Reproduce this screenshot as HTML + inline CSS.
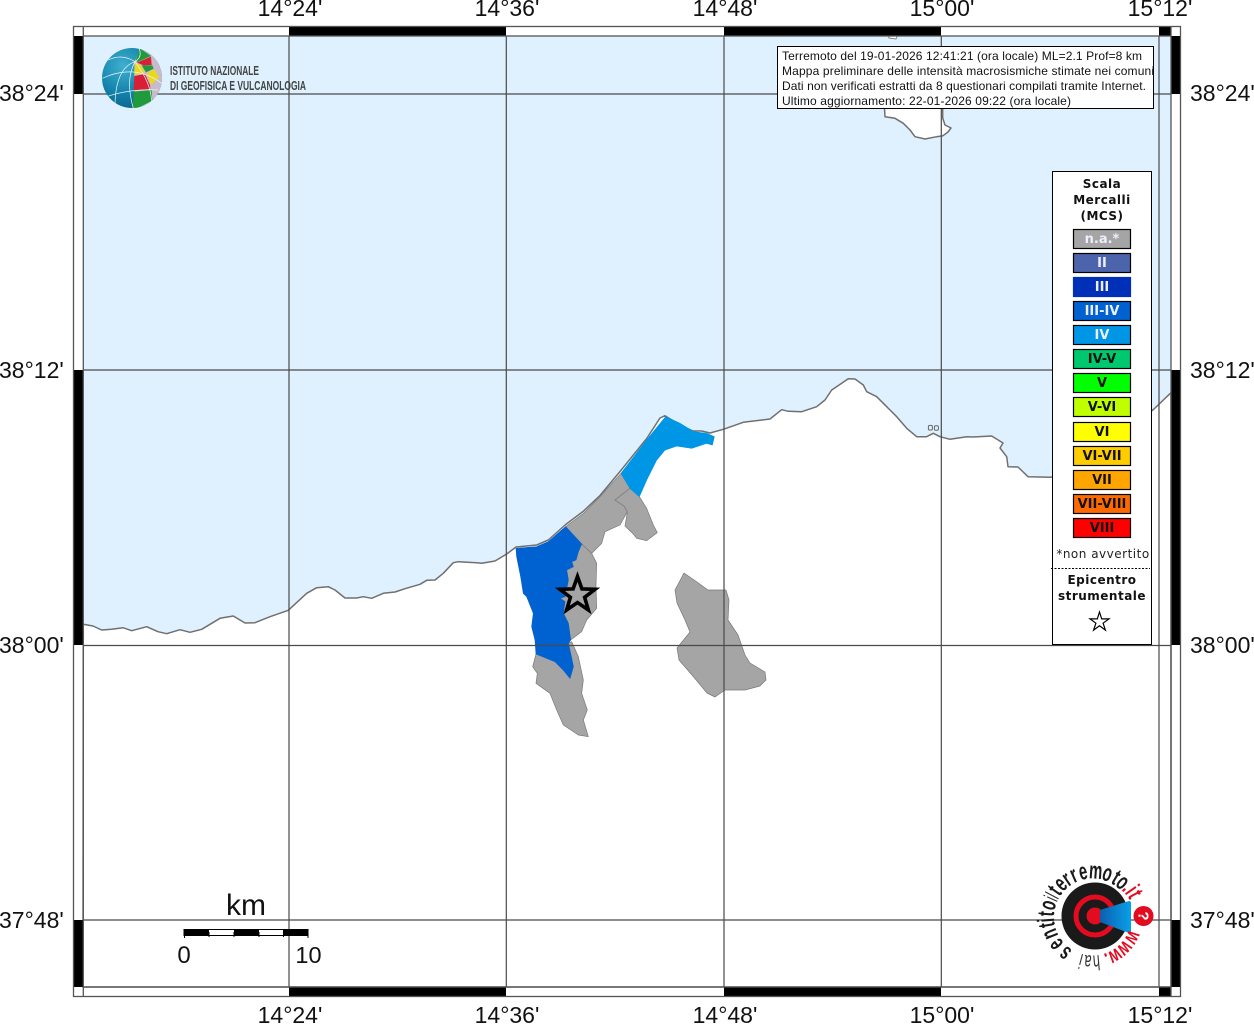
<!DOCTYPE html>
<html lang="it">
<head>
<meta charset="utf-8">
<title>Mappa macrosismica</title>
<style>
html,body{margin:0;padding:0;background:#fff;width:1254px;height:1024px;overflow:hidden}
svg{display:block}
.ax{font-family:"Liberation Sans",sans-serif;font-size:23px;fill:#111}
.hd{font-family:"Liberation Sans",sans-serif;font-size:12px;fill:#111}
.lg{font-family:"DejaVu Sans",sans-serif;font-size:12px;font-weight:bold;letter-spacing:.5px;text-anchor:middle;fill:#111}
.lb{font-family:"DejaVu Sans",sans-serif;font-size:13px;font-weight:bold;text-anchor:middle;fill:#111}
.w{fill:#eef}
.soft{filter:blur(.3px)}
.rb{font-family:"Liberation Sans",sans-serif;font-size:24px;font-weight:bold;text-anchor:middle;fill:#1a1a1a}
.rr{font-family:"Liberation Sans",sans-serif;font-size:24px;font-weight:bold;text-anchor:middle;fill:#e30b20}
.rw{font-family:"Liberation Sans",sans-serif;font-size:22px;font-weight:bold;text-anchor:middle;fill:#e30b20}
.rt{font-family:"Liberation Sans",sans-serif;font-size:21px;text-anchor:middle;fill:#333}
</style>
</head>
<body>
<svg width="1254" height="1024" viewBox="0 0 1254 1024" xmlns="http://www.w3.org/2000/svg">
<rect width="1254" height="1024" fill="#fff"/>
<!-- sea -->
<rect x="83" y="36" width="1088" height="951" fill="#dff1fe"/>
<g class="soft">
<!-- land -->
<polygon fill="#fff" stroke="#707070" stroke-width="1.5" stroke-linejoin="round" points="83.3,624.3 93,626 101.7,630 111.7,629.3 123,627.7 131.7,630.7 146.7,626.7 158,631.7 166.7,633.7 180,629.7 190,632.3 201.7,629.3 220,618.3 233.3,616 245,623 255,622.7 270,616.7 288.3,610.3 306.7,593.3 316.7,587.7 328.3,586.7 335,590 345,598 356.7,598 363.3,596.7 371.7,598.3 383.3,593.3 395,592 405,588.7 420,584.3 426.7,580.3 435,580 443.3,573.3 453.3,562.7 458.3,561.7 476.7,562.7 481.7,563.3 495,561 506.7,554 516,547 536.7,545 548.3,540 565.7,524.5 583,511.5 600,495.5 620,471.5 646.7,438.5 660,418 665,415.7 680,425 693,431 701.7,431 710,433 723.3,429.3 743.3,422.3 770,419 781.7,409.7 788.3,411.3 801.7,411.7 816.7,406.7 825,400 831.7,390 841.7,383.3 848.3,378.7 855,379 863.3,385 866.7,391.7 876.7,396.7 886.7,406.7 896.7,416.7 906.7,428.3 916.7,436.7 926.7,436.7 933.3,433.3 940,436.7 950,439.3 966.7,436.7 973,437 991.7,436 1003,443 1000,448 1006.7,456.7 1008,466.7 1018,467 1028,476.7 1050,477.3 1100,470 1140,420 1154,409 1171,392.7 1171,987 83,987"/>
<!-- north island -->
<polygon fill="#fff" stroke="#707070" stroke-width="1.5" stroke-linejoin="round" points="884,100 885,116.7 895,118.3 903.3,123.3 910,130 915,136.7 925,139 936.7,136.7 943,135.7 948,132 951,128 945,125 942.7,118 942.7,100"/>
<polygon fill="#fff" stroke="#888" stroke-width="1" points="888,34 889,38 896,39 898,34"/>
<rect x="928.4" y="425.4" width="4" height="4.6" rx="1.3" fill="none" stroke="#666"/>
<rect x="934.4" y="425.7" width="4" height="4.6" rx="1.3" fill="none" stroke="#666"/>
<!-- municipalities -->
<g transform="translate(500,400) scale(.33333)" stroke="#777" stroke-width="2" stroke-linejoin="round">
<polygon fill="#a5a5a5" points="197,380 250,340 300,290 363,220 390,265 345,300 372,318 382,335 360,375 315,395 305,430 275,460 245,432"/>
<polygon fill="#a5a5a5" points="245,432 275,460 290,490 288,560 290,625 260,660 245,695 212,720 205,670 190,640 195,605 180,595 195,590 205,540 200,510 220,500 215,485 228,480 235,455"/>
<polygon fill="#a5a5a5" points="108,762 165,785 190,810 210,835 220,800 212,760 205,730 215,725 235,770 250,840 245,880 262,930 250,960 265,1010 235,1005 190,975 170,930 150,880 108,850 112,820 98,800"/>
<polygon fill="#a5a5a5" points="390,265 418,290 440,325 460,375 472,398 440,422 410,415 398,400 375,378 382,335 372,318 345,300"/>
<polygon fill="#0062d0" stroke="#0062d0" points="48,445 110,440 145,425 197,380 245,432 235,455 228,480 215,485 220,500 200,510 205,540 195,590 180,595 195,605 190,640 205,670 212,720 205,730 215,775 220,800 210,835 190,810 165,785 108,762 105,720 95,680 100,640 80,590 70,580 62,530 50,470"/>
<polygon fill="#0096e6" stroke="#0096e6" points="363,220 440,120 497,50 540,70 580,95 620,100 643,110 637,135 620,130 575,145 530,138 495,150 470,180 440,240 418,290 390,265"/>
</g>
<polygon fill="#a5a5a5" stroke="#777" stroke-width=".7" stroke-linejoin="round" points="684,573 697,582 708,590 726,590 729,600 728,620 738,635 745,655 750,663 765,672 766,680 760,686 745,690 725,690 715,697 707,693 692,675 679,660 677,648 690,632 685,620 677,603 675,590"/>
</g>
<!-- grid -->
<g stroke="#4a4a4a" stroke-width="1.2" fill="none">
<path d="M289 36V987M506.3 36V987M724 36V987M941.3 36V987M1159 36V987"/>
<path d="M83 94H1171M83 370H1171M83 645.5H1171M83 920H1171"/>
</g>
<!-- epicentre star -->
<polygon fill="#a5a5a5" stroke="#000" stroke-width="3.6" stroke-miterlimit="10" points="577.5,576.5 581.9,588.9 595.1,589.3 584.6,597.3 588.4,610 577.5,602.5 566.6,610 570.4,597.3 559.9,589.3 573.1,588.9"/>
<!-- frame -->
<g fill="#000">
<rect x="289" y="26" width="217" height="10"/><rect x="724" y="26" width="217" height="10"/><rect x="1159" y="26" width="12" height="10"/>
<rect x="289" y="987" width="217" height="10"/><rect x="724" y="987" width="217" height="10"/><rect x="1159" y="987" width="12" height="10"/>
<rect x="73" y="36" width="10" height="58"/><rect x="73" y="370" width="10" height="275"/><rect x="73" y="920" width="10" height="67"/>
<rect x="1171" y="36" width="10" height="58"/><rect x="1171" y="370" width="10" height="275"/><rect x="1171" y="920" width="10" height="67"/>
</g>
<g fill="none" stroke="#555" stroke-width="1.3">
<rect x="73.5" y="26.5" width="1107" height="970"/>
<rect x="83.3" y="36" width="1087.7" height="951"/>
<path d="M83.3 26V36M1171 26V36M83.3 987V997M1171 987V997"/>
</g>
<!-- axis labels -->
<g class="ax" text-anchor="middle">
<text x="290" y="16">14°24'</text><text x="507" y="16">14°36'</text><text x="725" y="16">14°48'</text><text x="942" y="16">15°00'</text><text x="1160" y="16">15°12'</text>
<text x="290" y="1023">14°24'</text><text x="507" y="1023">14°36'</text><text x="725" y="1023">14°48'</text><text x="942" y="1023">15°00'</text><text x="1160" y="1023">15°12'</text>
</g>
<g class="ax">
<text x="-1" y="101">38°24'</text><text x="-1" y="378">38°12'</text><text x="-1" y="653">38°00'</text><text x="-1" y="928">37°48'</text>
<text x="1190" y="101">38°24'</text><text x="1190" y="378">38°12'</text><text x="1190" y="653">38°00'</text><text x="1190" y="928">37°48'</text>
</g>
<!-- INGV logo -->
<defs>
<clipPath id="gc"><circle cx="132" cy="78" r="30"/></clipPath>
<radialGradient id="gb" cx=".35" cy=".3" r=".8"><stop offset="0" stop-color="#3fb0cf"/><stop offset=".6" stop-color="#107fa8"/><stop offset="1" stop-color="#0c5f85"/></radialGradient>
<linearGradient id="cone" x1="0" x2="1" y1="0" y2="0"><stop offset="0" stop-color="#0b5fb0"/><stop offset="1" stop-color="#0aa0e6"/></linearGradient>
</defs>
<circle cx="132" cy="78" r="30" fill="url(#gb)"/>
<g clip-path="url(#gc)">
<g transform="translate(95,40) scale(.33333)">
<polygon fill="#c8bccb" points="140,20 215,20 215,215 118,215 118,65"/>
<polygon fill="#1f9a3c" points="122,60 135,25 168,48 128,66"/>
<polygon fill="#d81f36" points="126,68 168,50 170,75 146,76"/>
<polygon fill="#ecd81a" points="120,68 136,74 150,98 118,106"/>
<polygon fill="#1f9a3c" points="140,76 172,76 176,86 153,97"/>
<polygon fill="#ecd81a" points="155,100 178,88 192,113 168,134"/>
<polygon fill="#d81f36" points="118,108 150,102 165,135 166,147 116,152"/>
<polygon fill="#1f9a3c" points="116,155 170,150 172,182 113,212"/>
<g fill="none" stroke="#e8f4f8" stroke-width="2.2">
<path d="M120 65Q60 85 60 200"/>
<path d="M120 65Q90 120 115 205"/>
<path d="M120 65Q170 130 170 190"/>
<path d="M120 65Q145 50 130 20"/>
<path d="M40 60Q80 40 120 65"/>
<path d="M22 115Q120 70 200 130"/>
<path d="M35 170Q110 145 190 150"/>
</g>
</g>
</g>
<g font-family="'Liberation Sans',sans-serif" fill="#444" font-weight="bold" font-size="13">
<text x="170" y="75" textLength="89" lengthAdjust="spacingAndGlyphs">ISTITUTO NAZIONALE</text>
<text x="170" y="90" textLength="136" lengthAdjust="spacingAndGlyphs">DI GEOFISICA E VULCANOLOGIA</text>
</g>
<!-- header -->
<rect x="777.5" y="46.5" width="376" height="62" fill="#fff" stroke="#000"/>
<text class="hd" x="782" y="60" textLength="360">Terremoto del 19-01-2026 12:41:21 (ora locale) ML=2.1 Prof=8 km</text>
<text class="hd" x="782" y="75" textLength="372">Mappa preliminare delle intensità macrosismiche stimate nei comuni</text>
<text class="hd" x="782" y="90" textLength="364">Dati non verificati estratti da 8 questionari compilati tramite Internet.</text>
<text class="hd" x="782" y="105" textLength="289">Ultimo aggiornamento: 22-01-2026 09:22 (ora locale)</text>
<!-- legend -->
<rect x="1052.5" y="171.5" width="99" height="473" fill="#fff" stroke="#000"/>
<text class="lg" x="1102" y="188">Scala</text>
<text class="lg" x="1102" y="204">Mercalli</text>
<text class="lg" x="1102" y="220">(MCS)</text>
<g stroke="#000" stroke-width="1.2">
<rect x="1073.5" y="229.5" width="57" height="19" fill="#a5a5a5"/>
<rect x="1073.5" y="253.5" width="57" height="19" fill="#4c64ac"/>
<rect x="1073.5" y="277.5" width="57" height="19" fill="#0030b8" stroke="#0030b8"/>
<rect x="1073.5" y="301.5" width="57" height="19" fill="#0062d0"/>
<rect x="1073.5" y="325.5" width="57" height="19" fill="#0096e6"/>
<rect x="1073.5" y="349.5" width="57" height="19" fill="#00c86e"/>
<rect x="1073.5" y="373.5" width="57" height="19" fill="#00ff00"/>
<rect x="1073.5" y="397.5" width="57" height="19" fill="#c0ff00"/>
<rect x="1073.5" y="422.5" width="57" height="19" fill="#ffff00"/>
<rect x="1073.5" y="446.5" width="57" height="19" fill="#ffcc00"/>
<rect x="1073.5" y="470.5" width="57" height="19" fill="#ffa500"/>
<rect x="1073.5" y="494.5" width="57" height="19" fill="#ff6a00"/>
<rect x="1073.5" y="518.5" width="57" height="19" fill="#ff0000"/>
</g>
<text class="lb w" x="1102" y="243">n.a.*</text>
<text class="lb w" x="1102" y="267">II</text>
<text class="lb w" x="1102" y="291">III</text>
<text class="lb w" x="1102" y="315">III-IV</text>
<text class="lb w" x="1102" y="339">IV</text>
<text class="lb" x="1102" y="363">IV-V</text>
<text class="lb" x="1102" y="387">V</text>
<text class="lb" x="1102" y="411">V-VI</text>
<text class="lb" x="1102" y="436">VI</text>
<text class="lb" x="1102" y="460">VI-VII</text>
<text class="lb" x="1102" y="484">VII</text>
<text class="lb" x="1102" y="508">VII-VIII</text>
<text class="lb" x="1102" y="532">VIII</text>
<text x="1103" y="558" font-family="'DejaVu Sans',sans-serif" font-size="12" letter-spacing=".5" text-anchor="middle" fill="#222">*non avvertito</text>
<path d="M1051 568.5H1150" stroke="#000" stroke-dasharray="2 1.5"/>
<text class="lg" x="1102" y="584">Epicentro</text>
<text class="lg" x="1102" y="600">strumentale</text>
<polygon fill="#fff" stroke="#000" stroke-width="1.2" points="1099.5,612 1101.7,618.9 1109,618.9 1103.1,623.2 1105.4,630.1 1099.5,625.8 1093.6,630.1 1095.9,623.2 1090,618.9 1097.3,618.9"/>
<!-- scale bar -->
<rect x="184" y="929.5" width="124" height="6" fill="#fff" stroke="#000" stroke-width="1"/>
<g fill="#000">
<rect x="184" y="929" width="25" height="6.5"/><rect x="234" y="929" width="25" height="6.5"/><rect x="283" y="929" width="25" height="6.5"/>
</g>
<path d="M184.5 929V938M209 932V937M234 932V937M259 932V937M283.5 932V937M308 929V938" stroke="#000"/>
<g font-family="'Liberation Sans',sans-serif" fill="#111" text-anchor="middle">
<text x="246" y="915" font-size="30">km</text>
<text x="184" y="963" font-size="24">0</text>
<text x="308.5" y="963" font-size="23.5">10</text>
</g>
<!-- HSIT logo -->
<circle cx="1095" cy="916" r="33.5" fill="#1a1a1a"/>
<circle cx="1095" cy="916" r="19" fill="none" stroke="#e30b20" stroke-width="5"/>
<circle cx="1095" cy="916" r="8.5" fill="#e30b20"/>
<path d="M1100 910L1129 901Q1131 901 1131 903V931Q1131 934 1129 933L1100 922Z" fill="url(#cone)"/>
<circle cx="1143.5" cy="916" r="10" fill="#e30b20"/>
<text x="1143.5" y="921" font-family="'Liberation Sans',sans-serif" font-size="15" font-weight="bold" fill="#fff" text-anchor="middle" transform="rotate(90 1143.5 916)">?</text>
<g transform="translate(2.5,-1)">
<text class="rw" transform="translate(1124.3,935.5) rotate(117) scale(.68,1)">w</text>
<text class="rw" transform="translate(1117.7,944.8) rotate(134) scale(.68,1)">w</text>
<text class="rw" transform="translate(1109.3,951.3) rotate(150) scale(.68,1)">w</text>
<text class="rw" transform="translate(1102.5,954.4) rotate(161) scale(.68,1)">.</text>
<text class="rt" transform="translate(1093.4,956.3) rotate(175) scale(.6,1)">h</text>
<text class="rt" transform="translate(1086,956.3) rotate(186) scale(.6,1)">a</text>
<text class="rt" transform="translate(1080,955.2) rotate(195) scale(.6,1)">i</text>
<text class="rb" transform="translate(1066.8,948.8) rotate(217) scale(.62,1)">s</text>
<text class="rb" transform="translate(1059.2,941.2) rotate(233) scale(.62,1)">e</text>
<text class="rb" transform="translate(1054.3,932.4) rotate(248) scale(.62,1)">n</text>
<text class="rb" transform="translate(1052.1,924.7) rotate(260) scale(.62,1)">t</text>
<text class="rb" transform="translate(1051.6,920.7) rotate(266) scale(.62,1)">i</text>
<text class="rb" transform="translate(1051.6,915.3) rotate(274) scale(.62,1)">t</text>
<text class="rb" transform="translate(1052.8,908) rotate(285) scale(.62,1)">o</text>
<text class="rt" transform="translate(1054.8,902.3) rotate(294) scale(.6,1)">i</text>
<text class="rt" transform="translate(1056,899.9) rotate(298) scale(.6,1)">l</text>
<text class="rb" transform="translate(1058.5,895.9) rotate(305) scale(.62,1)">t</text>
<text class="rb" transform="translate(1063.2,890.3) rotate(316) scale(.62,1)">e</text>
<text class="rb" transform="translate(1068.5,886.1) rotate(326) scale(.62,1)">r</text>
<text class="rb" transform="translate(1074.3,882.8) rotate(336) scale(.62,1)">r</text>
<text class="rb" transform="translate(1082,880.3) rotate(348) scale(.62,1)">e</text>
<text class="rb" transform="translate(1092.7,879.6) rotate(4) scale(.62,1)">m</text>
<text class="rb" transform="translate(1102.5,881.6) rotate(19) scale(.62,1)">o</text>
<text class="rb" transform="translate(1109.8,885) rotate(31) scale(.62,1)">t</text>
<text class="rb" transform="translate(1115.3,888.9) rotate(41) scale(.62,1)">o</text>
<text class="rr" transform="translate(1120.1,892.2) rotate(49) scale(.62,1)">.</text>
<text class="rr" transform="translate(1123,895.2) rotate(55) scale(.62,1)">i</text>
<text class="rr" transform="translate(1126,899) rotate(62) scale(.62,1)">t</text>
</g>
</svg>
</body>
</html>
